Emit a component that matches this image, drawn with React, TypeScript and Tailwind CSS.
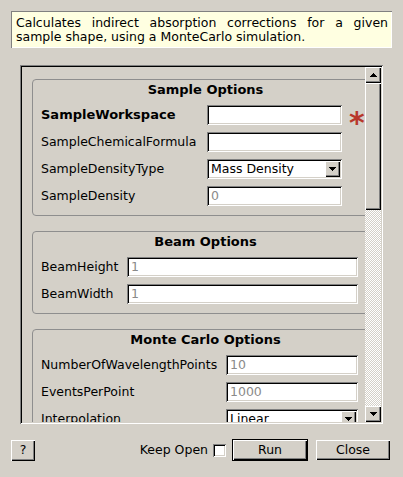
import type { ReactNode } from "react";

// classic 3D bevels
const SUNKEN =
  "shadow-[inset_1px_1px_0_#808080,inset_-1px_-1px_0_#ffffff,inset_2px_2px_0_#000000,inset_-2px_-2px_0_#d4d0c8]";
const RAISED =
  "shadow-[inset_1px_1px_0_#ffffff,inset_-1px_-1px_0_#000000,inset_-2px_-2px_0_#808080]";

function Arrow({ up }: { up?: boolean }) {
  return (
    <svg width="7" height="4" viewBox="0 0 7 4" shapeRendering="crispEdges">
      {up ? (
        <path d="M3 0h1v1h1v1h1v1h1v1H0V3h1V2h1V1h1z" fill="#000" />
      ) : (
        <path d="M0 0h7v1H6v1H5v1H4v1H3V3H2V2H1V1H0z" fill="#000" />
      )}
    </svg>
  );
}

function TextField({ value, width }: { value?: string; width: string }) {
  return (
    <div
      className={`${width} h-[20px] shrink-0 bg-white ${SUNKEN} pl-[4px] leading-[20px] text-[#8a8a8a]`}
    >
      {value}
    </div>
  );
}

function Combo({ value, width }: { value: string; width: string }) {
  return (
    <div className={`${width} flex h-[20px] shrink-0 bg-white p-[2px] ${SUNKEN}`}>
      <span className="flex-1 pl-[2px] leading-[16px] text-black">{value}</span>
      <span
        className={`flex h-[16px] w-[15px] items-center justify-center bg-[#d4d0c8] ${RAISED}`}
      >
        <Arrow />
      </span>
    </div>
  );
}

function Group({ title, children }: { title: string; children: ReactNode }) {
  return (
    <div className="w-[347px] shrink-0 rounded-[4px] border border-[#8e8e8e] px-[8px] pt-[2px] pb-[9px]">
      <div className="text-center text-[13px] font-bold leading-[16px]">{title}</div>
      {children}
    </div>
  );
}

function Row({ label, bold, children }: { label: string; bold?: boolean; children: ReactNode }) {
  return (
    <div className="mt-[7px] flex h-[20px] w-[317px] items-center whitespace-nowrap">
      <span className={bold ? "text-[13px] font-bold" : ""}>{label}</span>
      <span className="flex-1" />
      {children}
    </div>
  );
}

export default function App() {
  return (
    <div className="h-[477px] w-[403px] overflow-hidden bg-[#d4d0c8] font-['DejaVu_Sans',sans-serif] text-[12.5px] text-black">
      {/* Description */}
      <div className="mx-[11px] mt-[11px] h-[37px] bg-[#ffffe1] pl-[5px] pr-[4px] pt-[5px] text-justify leading-[14px] shadow-[inset_1px_1px_0_#808080,inset_-1px_-1px_0_#ffffff]">
        Calculates indirect absorption corrections for a given sample shape, using a MonteCarlo
        simulation.
      </div>

      {/* Scroll area */}
      <div className={`mx-[20px] mt-[17px] flex h-[359px] p-[2px] ${SUNKEN}`}>
        <div className="flex-1 overflow-hidden pl-[10px] pt-[12px]">
          <Group title="Sample Options">
            <Row label="SampleWorkspace" bold>
              <TextField width="w-[135px]" />
              <span className="w-[16px] shrink-0 translate-x-[7px] translate-y-[8px] text-[30px] font-bold leading-[20px] text-[#b8372b]">
                *
              </span>
            </Row>
            <Row label="SampleChemicalFormula">
              <TextField width="w-[135px]" />
              <span className="w-[16px] shrink-0" />
            </Row>
            <Row label="SampleDensityType">
              <Combo value="Mass Density" width="w-[135px]" />
              <span className="w-[16px] shrink-0" />
            </Row>
            <Row label="SampleDensity">
              <TextField value="0" width="w-[135px]" />
              <span className="w-[16px] shrink-0" />
            </Row>
          </Group>

          <div className="mt-[15px]">
            <Group title="Beam Options">
              <Row label="BeamHeight">
                <TextField value="1" width="w-[231px]" />
              </Row>
              <Row label="BeamWidth">
                <TextField value="1" width="w-[231px]" />
              </Row>
            </Group>
          </div>

          <div className="mt-[15px]">
            <Group title="Monte Carlo Options">
              <Row label="NumberOfWavelengthPoints">
                <TextField value="10" width="w-[132px]" />
              </Row>
              <Row label="EventsPerPoint">
                <TextField value="1000" width="w-[132px]" />
              </Row>
              <Row label="Interpolation">
                <Combo value="Linear" width="w-[132px]" />
              </Row>
              <Row label="SparseInstrument">
                <TextField width="w-[132px]" />
              </Row>
            </Group>
          </div>
        </div>

        {/* Scrollbar */}
        <div className="flex w-[16px] shrink-0 flex-col">
          <div className={`flex h-[16px] items-center justify-center bg-[#d4d0c8] ${RAISED}`}>
            <Arrow up />
          </div>
          <div className={`h-[127px] bg-[#d4d0c8] ${RAISED}`} />
          <div className="flex-1 bg-[repeating-conic-gradient(#ffffff_0_25%,#d4d0c8_0_50%)] bg-[length:2px_2px]" />
          <div className={`flex h-[16px] items-center justify-center bg-[#d4d0c8] ${RAISED}`}>
            <Arrow />
          </div>
        </div>
      </div>

      {/* Buttons */}
      <div className="mt-[15px] flex h-[22px] items-center pl-[11px] pr-[13px]">
        <div className={`flex h-[21px] w-[24px] items-center justify-center ${RAISED}`}>?</div>
        <span className="flex-1" />
        <span>Keep Open</span>
        <span className={`ml-[5px] h-[13px] w-[13px] bg-white ${SUNKEN}`} />
        <div className="ml-[6px] border border-black">
          <div className={`flex h-[20px] w-[74px] items-center justify-center ${RAISED}`}>Run</div>
        </div>
        <div className={`ml-[8px] flex h-[20px] w-[74px] items-center justify-center ${RAISED}`}>
          Close
        </div>
      </div>
    </div>
  );
}
